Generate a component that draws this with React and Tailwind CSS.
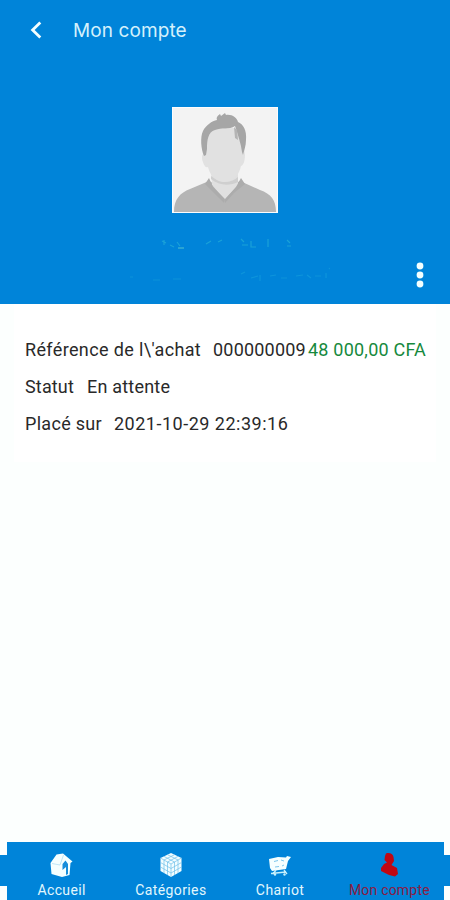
import React from 'react';

const BackIcon = () => (
    <svg width="12" height="18" viewBox="0 0 12 18" fill="none" stroke="#f4ffff" strokeWidth="2.8">
        <path d="M10.3 1.4L2.6 9l7.7 7.6" />
    </svg>
);

const Avatar = () => (
    <svg width="106" height="106" viewBox="0 0 106 106">
        <rect width="106" height="106" fill="#fbfcfd" />
        <rect x="1" y="1" width="104" height="104" fill="#f3f3f3" />
        <path d="M2 105C2 92 8 86 18 82L37 74 53 82 68 74 88 83C99 87 104 93 104 105Z" fill="#b5b5b5" />
        <path d="M39 62H66V78L53 93 40 78Z" fill="#e0e0e0" />
        <path d="M39 69C48 76 59 77 66 70V75C58 79 47 79 39 72Z" fill="#cfcfcf" />
        <path d="M37 71L33 77 44 88 52 96 53 92 41 80ZM69 71L73 77 62 86 53 96 53 92 64 80Z" fill="#acacac" />
        <path d="M32 47C29 47 30 53 31 55 32 59 34 61 36 60C38 69 45 75 52 75 60 75 67 69 69 59 72 58 73 52 73 48L71 34 62 21 43 22 34 29Z" fill="#e1e1e1" />
        <path d="M32 49C29 42 28 30 31 24C34 18 40 14 45 13C44 11 45 9 48 7L49 9 53 6 54 8C60 7 65 11 66 15C71 17 75 23 74 33C74 39 72 43 71 48L70 45C69 37 66 28 63 19C57 23 50 20 43 23C36 25 35 33 35 42L34 48Z" fill="#a6a6a6" />
        <path d="M62 20L63 31 66 33 65 23Z" fill="#b4b4b4" />
    </svg>
);

const FadedDetails = () => (
    <svg width="210" height="54" viewBox="0 0 210 54" fill="none" strokeWidth="1.2">
        <g stroke="#2bb5d8" opacity=".6">
            <path d="M42 10l4 2M44 9v5M50 14l4 2M57 11l3 4M86 13l5-3M98 11l4-2M121 8l3 3M122 14h6M131 10v6h5M148 8v8M167 9l3 3M167 15h4" />
            <path d="M58 17h6" stroke="#73dccd" />
        </g>
        <g stroke="#139bdc" opacity=".7">
            <path d="M10 46h3M33 49h7M53 48h8M121 43l4-2M131 47l7-2M140 44v6M150 45l6-1M161 47h6M176 45l7-1M187 44l4 3M195 45h6M206 42v5M209 37l1 1" />
        </g>
    </svg>
);

const MoreIcon = () => (
    <svg width="8" height="26" viewBox="0 0 8 26" fill="#f4ffff">
        <circle cx="4" cy="4" r="3.4" />
        <circle cx="4" cy="13" r="3.4" />
        <circle cx="4" cy="22" r="3.4" />
    </svg>
);

const HomeIcon = () => (
    <svg width="26" height="26" viewBox="0 0 26 26">
        <path d="M1.5 11L7.5 2.5 14 1.5 23.5 9.5 21.5 11 20.5 23 13 25 2.5 22Z" fill="#f5ffff" />
        <path d="M3 11.5L11 13 14.5 3" fill="none" stroke="#b0dff4" strokeWidth=".8" />
        <path d="M13.5 12L16.5 8.5 19 12V22L17 23V15L13.5 18Z" fill="#168edb" />
    </svg>
);

const CubeIcon = () => (
    <svg width="26" height="26" viewBox="0 0 26 26">
        <path d="M13 1L23.5 6V19L13 25 2.5 19V6Z" fill="#f3fdff" />
        <path d="M13 12V25M2.5 6L13 12 23.5 6M6 4.4L16.5 10V23M20 4.4L9.5 10V23M9.5 2.7L20 8V21M16.5 2.7L6 8V21M2.5 10.5L13 16.5 23.5 10.5M2.5 15L13 21 23.5 15" fill="none" stroke="#6fc0ea" strokeWidth=".7" />
    </svg>
);

const CartIcon = () => (
    <svg width="26" height="26" viewBox="0 0 26 26" fill="none">
        <path d="M2 7L11 5 19 5.5 20 4 24 5 21 9 19 17 5 19 3 16Z" fill="#f5ffff" />
        <path d="M4 21.5L19 20M6 22L9 18M17 18L20 22" stroke="#c8f0fb" strokeWidth="1.3" />
        <path d="M7 9.5l4-1M14 8l3 1M8 15l4-.5M15 14l2-1" stroke="#5db7e6" strokeWidth=".8" />
        <circle cx="8" cy="22.5" r="1.2" fill="#c8f0fb" />
        <circle cx="17.5" cy="22.5" r="1.2" fill="#c8f0fb" />
    </svg>
);

const AccountIcon = () => (
    <svg width="26" height="26" viewBox="0 0 26 26" fill="#c00713">
        <path d="M10 1.5C13 .2 17 1.5 17.5 5L18 9 15.5 13 21 16 22 22 19 24.5 13 23 5 19 5 16 8 12 11 10.5 8.5 8 9 4Z" />
    </svg>
);

const tabs = [
    { label: 'Accueil', icon: HomeIcon, style: 'tracking-[0.35px] text-[#e2f7fd]' },
    { label: 'Catégories', icon: CubeIcon, style: 'tracking-[0.4px] text-[#e2f7fd]' },
    { label: 'Chariot', icon: CartIcon, style: 'tracking-[0.5px] text-[#e2f7fd]' },
    { label: 'Mon compte', icon: AccountIcon, style: 'tracking-[0.2px] text-[#8a1c44]' },
];

const App = () => {
    return (
        <div className="flex h-[900px] w-[450px] flex-col overflow-hidden bg-[#fcfffe] font-['Roboto',sans-serif]">
            <header className="relative flex h-[304px] shrink-0 flex-col items-center bg-[#0084d9]">
                <div className="flex h-[60px] w-full items-center pl-[30px]">
                    <BackIcon />
                    <h1 className="mt-[3px] ml-[31px] font-['Inter',sans-serif] text-[19px] tracking-[0.1px] text-[#d4f1fc]">Mon compte</h1>
                </div>
                <div className="mt-[47px]">
                    <Avatar />
                </div>
                <div className="mt-[18px]">
                    <FadedDetails />
                </div>
                <button className="absolute right-[26px] bottom-[16px]" aria-label="Options">
                    <MoreIcon />
                </button>
            </header>

            <main className="mx-[14px] h-[158px] bg-white pt-[27px] pl-[11px] text-[18px] leading-[37px] text-[#292929]">
                <div className="flex whitespace-nowrap">
                    <span className="w-[188px] tracking-[0.36px]">Référence de l\'achat</span>
                    <span className="w-[95px] tracking-[0.2px]">000000009</span>
                    <span className="tracking-[0.22px] text-[#16893d]">48 000,00 CFA</span>
                </div>
                <div className="flex whitespace-nowrap">
                    <span className="w-[62px] tracking-[0.15px]">Statut</span>
                    <span className="tracking-[0.2px]">En attente</span>
                </div>
                <div className="flex whitespace-nowrap">
                    <span className="w-[89px] tracking-[0.3px]">Placé sur</span>
                    <span className="tracking-[0.5px]">2021-10-29 22:39:16</span>
                </div>
            </main>

            <nav className="mt-auto flex h-[58px]">
                <div className="mt-[13px] h-[31px] w-[7px] bg-[#0084d9]" />
                <div className="grid flex-1 grid-cols-4 bg-[#0084d9]">
                    {tabs.map(({ label, icon: Icon, style }) => (
                        <div key={label} className="flex flex-col items-center pt-[10px]">
                            <Icon />
                            <span className={`mt-[4px] text-[14px] leading-[17px] whitespace-nowrap ${style}`}>{label}</span>
                        </div>
                    ))}
                </div>
                <div className="mt-[13px] h-[31px] w-[6px] bg-[#0084d9]" />
            </nav>
        </div>
    );
};

export default App;
